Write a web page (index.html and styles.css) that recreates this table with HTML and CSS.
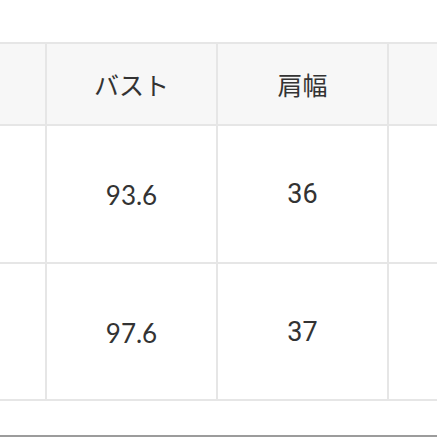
FILE: index.html
```html
<!DOCTYPE html>
<html lang="ja">
<head>
<meta charset="utf-8">
<link rel="stylesheet" href="styles.css">
</head>
<body>
<div class="frame">
  <div class="size-table">
    <div class="cell head"></div>
    <div class="cell head">バスト</div>
    <div class="cell head">肩幅</div>
    <div class="cell head"></div>
    <div class="cell"></div>
    <div class="cell num">93.6</div>
    <div class="cell int">36</div>
    <div class="cell"></div>
    <div class="cell"></div>
    <div class="cell num">97.6</div>
    <div class="cell int">37</div>
    <div class="cell"></div>
  </div>
  <div class="bottom-rule"></div>
</div>
</body>
</html>
```

FILE: styles.css
```css
html, body {
  margin: 0;
  padding: 0;
  background: #ffffff;
}
.frame {
  width: 437px;
  height: 437px;
  overflow: hidden;
}
.size-table {
  margin-top: 42px;
  margin-left: -124px;
  width: 682px;
  display: grid;
  grid-template-columns: 169px 169px 169px 169px;
  grid-template-rows: 80px 136px 135px;
  gap: 2px;
  padding: 2px 0;
  background: #e6e6e6;
}
.cell {
  background: #ffffff;
  display: flex;
  align-items: center;
  justify-content: center;
  color: #333333;
  font-family: "Noto Sans CJK JP", "Roboto", sans-serif;
  font-size: 25px;
}
.head {
  background: #f7f7f7;
}
.num {
  font-family: "Lato", sans-serif;
  font-size: 26px;
  padding-top: 2px;
}
.int {
  font-family: "Roboto", sans-serif;
  font-size: 27px;
}
.bottom-rule {
  margin-top: 34px;
  height: 2px;
  background: #9c9c9c;
}
```
